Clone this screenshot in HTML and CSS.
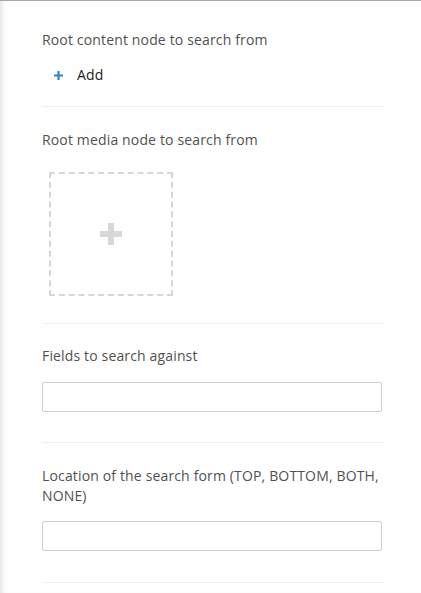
FILE: index.html
```html
<!DOCTYPE html>
<html>
<head>
<meta charset="utf-8">
<link rel="stylesheet" href="styles.css">
</head>
<body>
<div class="panel">
  <div class="row row-first">
    <div class="label">Root content node to search from</div>
    <div class="add">
      <svg class="add-icon" width="9" height="9" viewBox="0 0 9 9"><path d="M4.5 0v9M0 4.5h9" stroke="#2f7fe0" stroke-width="2.2"/></svg>
      <span>Add</span>
    </div>
  </div>
  <div class="row row-media">
    <div class="label">Root media node to search from</div>
    <div class="media-box"><span class="media-plus"></span></div>
  </div>
  <div class="row">
    <div class="label">Fields to search against</div>
    <input class="text-input" type="text">
  </div>
  <div class="row row-last">
    <div class="label">Location of the search form (TOP, BOTTOM, BOTH, NONE)</div>
    <input class="text-input" type="text">
  </div>
</div>
</body>
</html>
```
FILE: styles.css
```css
html, body {
  margin: 0;
  padding: 0;
  background: #fff;
}
body {
  font-family: "Open Sans", "Noto Sans", sans-serif;
  font-size: 14px;
  line-height: 20px;
  letter-spacing: 0.15px;
  color: #515151;
  border-top: 1px solid #a6a6a6;
  min-height: 592px;
  box-shadow: inset 5px 0 5px -3px rgba(0,0,0,0.12);
}
.panel {
  padding-left: 42px;
  width: 342px;
}
.row {
  padding: 22px 0 30px;
  border-bottom: 1px solid #f2f2f2;
}
.row-first {
  padding-top: 29px;
  padding-bottom: 21px;
}
.row-media {
  padding-top: 23px;
  padding-bottom: 27px;
}
.row-last {
  padding-top: 23px;
  padding-bottom: 31px;
}
.label {
  margin-bottom: 16px;
}
.row-first .label { margin-bottom: 15px; }
.row-media .label { margin-bottom: 22px; }
.row-last .label { margin-bottom: 15px; }
.add {
  display: flex;
  align-items: center;
  padding-left: 12px;
  height: 20px;
  color: #1b1b1b;
}
.add-icon {
  margin-right: 14px;
}
.media-box {
  margin-left: 7px;
  width: 124px;
  height: 124px;
  box-sizing: border-box;
  border: 2px dashed #d6d6d6;
  display: flex;
  align-items: center;
  justify-content: center;
}
.media-plus {
  position: relative;
  width: 22px;
  height: 22px;
}
.media-plus::before, .media-plus::after {
  content: "";
  position: absolute;
  background: #d8d8d8;
}
.media-plus::before {
  left: 0; right: 0; top: 8px; height: 6px;
}
.media-plus::after {
  top: 0; bottom: 0; left: 8px; width: 6px;
}
.text-input {
  display: block;
  width: 340px;
  height: 30px;
  box-sizing: border-box;
  border: 1px solid #cccccc;
  border-radius: 2px;
  margin: 0;
  padding: 4px 6px;
  font: inherit;
}
```
